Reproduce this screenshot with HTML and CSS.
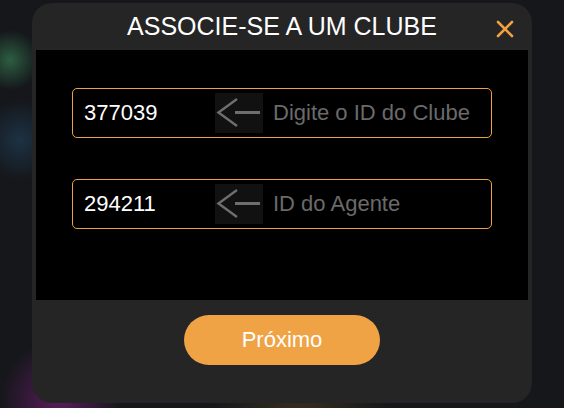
FILE: index.html
```html
<!DOCTYPE html>
<html lang="pt-br">
<head>
    <meta charset="UTF-8">
    <meta name="viewport" content="width=device-width, initial-scale=1.0">
    <title>Associe-se a um Clube</title>
    <link rel="stylesheet" href="styles.css">
</head>
<body>
    <div class="backdrop">
        <div class="dialog">
            <header class="dialog-header">
                <h1>ASSOCIE-SE A UM CLUBE</h1>
                <button class="close" aria-label="Fechar">
                    <svg width="18" height="18" viewBox="0 0 18 18">
                        <path d="M2 2 L16 16 M16 2 L2 16" stroke="#f0a040" stroke-width="2.6" stroke-linecap="round"/>
                    </svg>
                </button>
            </header>

            <main class="dialog-body">
                <div class="field">
                    <span class="value">377039</span>
                    <span class="arrow">
                        <svg width="48" height="40" viewBox="0 0 48 40">
                            <path d="M22 6 L3.5 19.5 L22 33" fill="none" stroke="#6e6e6e" stroke-width="2.4"/>
                            <path d="M20 19.5 L45 19.5" fill="none" stroke="#6e6e6e" stroke-width="3"/>
                        </svg>
                    </span>
                    <input class="hint" type="text" placeholder="Digite o ID do Clube">
                </div>
                <div class="field">
                    <span class="value">294211</span>
                    <span class="arrow">
                        <svg width="48" height="40" viewBox="0 0 48 40">
                            <path d="M22 6 L3.5 19.5 L22 33" fill="none" stroke="#6e6e6e" stroke-width="2.4"/>
                            <path d="M20 19.5 L45 19.5" fill="none" stroke="#6e6e6e" stroke-width="3"/>
                        </svg>
                    </span>
                    <input class="hint" type="text" placeholder="ID do Agente">
                </div>
            </main>

            <footer class="dialog-footer">
                <button class="next">Próximo</button>
            </footer>
        </div>
    </div>
</body>
</html>
```

FILE: styles.css
```css
body {
    margin: 0;
    padding: 0;
    font-family: "Liberation Sans", Arial, sans-serif;
    background-color: #15171b;
    background-image:
        radial-gradient(circle at 10px 60px, rgba(60, 140, 90, 0.6), transparent 30px),
        radial-gradient(circle at 20px 140px, rgba(40, 90, 130, 0.4), transparent 40px),
        radial-gradient(circle at 60px 400px, rgba(120, 30, 120, 0.7), transparent 60px),
        radial-gradient(circle at 300px 420px, rgba(120, 90, 40, 0.35), transparent 90px);
    width: 564px;
    height: 408px;
    overflow: hidden;
}

.backdrop {
    padding: 3px 32px 0;
}

.dialog {
    width: 500px;
    height: 400px;
    background: #252525;
    border-radius: 20px;
    display: flex;
    flex-direction: column;
    overflow: hidden;
}

.dialog-header {
    height: 47px;
    display: flex;
    align-items: center;
    justify-content: center;
    position: relative;
}

.dialog-header h1 {
    margin: 0;
    color: #ffffff;
    font-size: 25px;
    font-weight: normal;
    line-height: 1;
}

.close {
    position: absolute;
    right: 18px;
    top: 17px;
    background: none;
    border: 0;
    padding: 0;
    width: 18px;
    height: 18px;
}

.close svg {
    display: block;
}

.dialog-body {
    margin: 0 4px;
    height: 250px;
    background: #000000;
    padding: 38px 36px 0;
    box-sizing: border-box;
    display: flex;
    flex-direction: column;
    gap: 41px;
}

.field {
    height: 50px;
    border: 1.5px solid #f0a040;
    border-radius: 5px;
    box-sizing: border-box;
    display: flex;
    align-items: center;
    padding-left: 11px;
}

.value {
    width: 131px;
    color: #ffffff;
    font-size: 22px;
}

.arrow {
    width: 48px;
    height: 40px;
    background: #111111;
}

.arrow svg {
    display: block;
}

.hint {
    flex: 1;
    min-width: 0;
    margin-left: 10px;
    background: transparent;
    border: 0;
    outline: none;
    padding: 0;
    font-family: "Liberation Sans", Arial, sans-serif;
    font-size: 22px;
    color: #ffffff;
}

.hint::placeholder {
    color: #6a6a6a;
}

.dialog-footer {
    flex: 1;
    display: flex;
    justify-content: center;
    padding-top: 15px;
}

.next {
    width: 196px;
    height: 50px;
    border: 0;
    border-radius: 25px;
    background: #f0a345;
    color: #ffffff;
    font-family: "Liberation Sans", Arial, sans-serif;
    font-size: 22px;
}
```
